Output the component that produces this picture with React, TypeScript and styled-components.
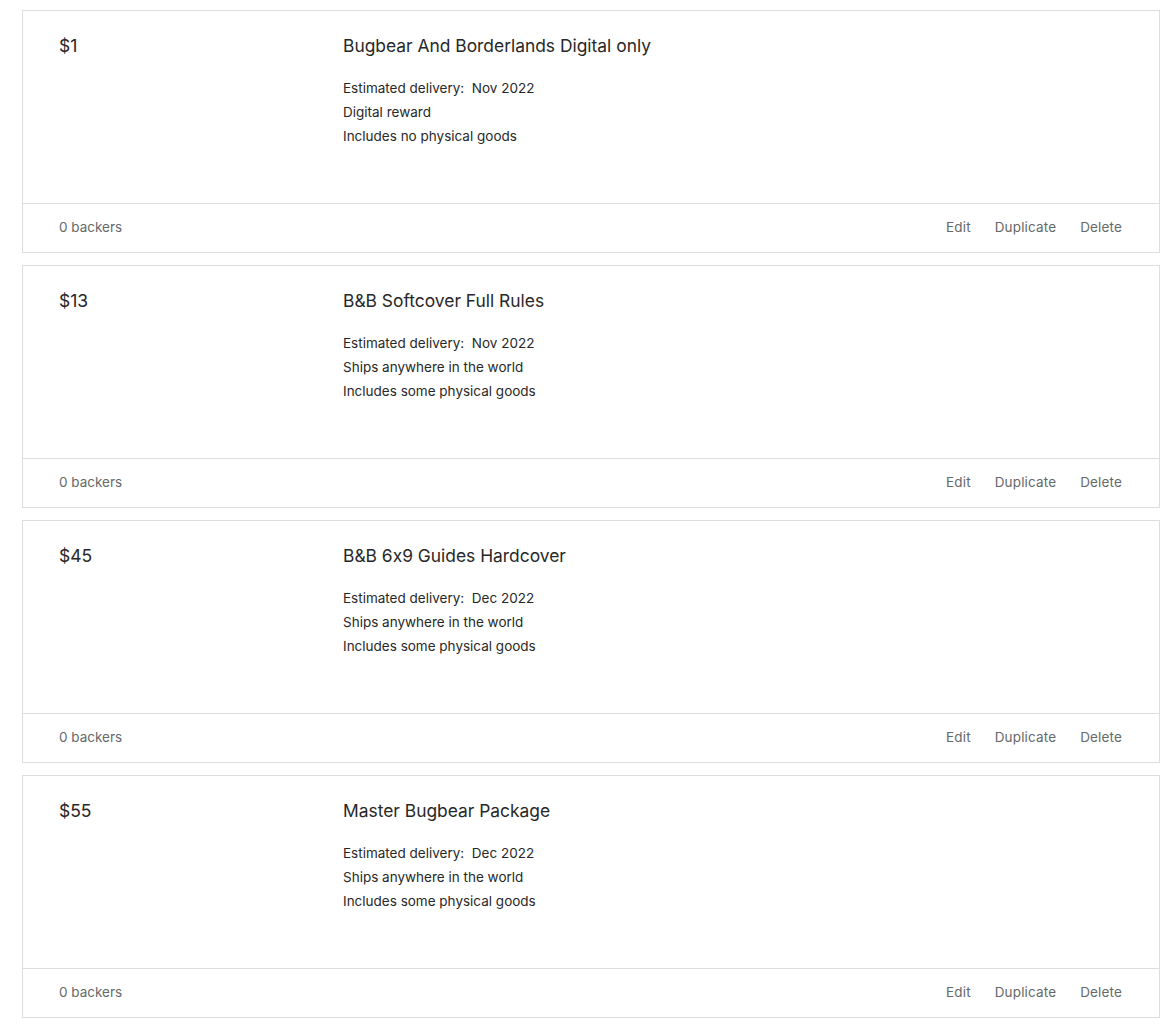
import styled, { createGlobalStyle } from "styled-components";

type Reward = {
  price: string;
  title: string;
  delivery: string;
  shipping: string;
  goods: string;
};

const rewards: Reward[] = [
  { price: "$1", title: "Bugbear And Borderlands Digital only", delivery: "Nov 2022", shipping: "Digital reward", goods: "Includes no physical goods" },
  { price: "$13", title: "B&B Softcover Full Rules", delivery: "Nov 2022", shipping: "Ships anywhere in the world", goods: "Includes some physical goods" },
  { price: "$45", title: "B&B 6x9 Guides Hardcover", delivery: "Dec 2022", shipping: "Ships anywhere in the world", goods: "Includes some physical goods" },
  { price: "$55", title: "Master Bugbear Package", delivery: "Dec 2022", shipping: "Ships anywhere in the world", goods: "Includes some physical goods" },
];

export default function App() {
  return (
    <>
      <GlobalStyle />
      <List>
        {rewards.map((r) => (
          <Card key={r.price}>
            <CardBody>
              <Price>{r.price}</Price>
              <Info>
                <Title>{r.title}</Title>
                <Details>
                  <Line>Estimated delivery:&nbsp; {r.delivery}</Line>
                  <Line>{r.shipping}</Line>
                  <Line>{r.goods}</Line>
                </Details>
              </Info>
            </CardBody>
            <Footer>
              <Muted>0 backers</Muted>
              <Actions>
                <Action>Edit</Action>
                <Action>Duplicate</Action>
                <Action>Delete</Action>
              </Actions>
            </Footer>
          </Card>
        ))}
      </List>
    </>
  );
}

const GlobalStyle = createGlobalStyle`
body {
  margin: 0;
  background: #fff;
  font-family: Inter, "Noto Sans", "Liberation Sans", sans-serif;
  font-feature-settings: "calt" 0;
  color: #282828;
}
`;

const List = styled.div`
display: flex;
flex-direction: column;
gap: 12px;
padding: 10px 11px 0 22px;
`;

const Card = styled.div`
border: 1px solid #dcdedd;
display: flex;
flex-direction: column;
`;

const CardBody = styled.div`
height: 193px;
box-sizing: border-box;
padding: 23px 36px 0;
display: flex;
border-bottom: 1px solid #dcdedd;
`;

const Price = styled.div`
width: 284px;
font-size: 17.5px;
line-height: 24px;
`;

const Info = styled.div`
display: flex;
flex-direction: column;
gap: 18px;
`;

const Title = styled.div`
font-size: 17.4px;
line-height: 24px;
`;

const Details = styled.div`
display: flex;
flex-direction: column;
`;

const Line = styled.div`
font-size: 13.5px;
line-height: 24px;
`;

const Footer = styled.div`
height: 48px;
box-sizing: border-box;
padding: 0 37px 2px 36px;
display: flex;
align-items: center;
justify-content: space-between;
`;

const Muted = styled.span`
font-size: 13.5px;
color: #656969;
`;

const Actions = styled.div`
display: flex;
gap: 24px;
`;

const Action = styled.span`
font-size: 13.5px;
letter-spacing: 0.15px;
color: #656969;
cursor: pointer;
`;
